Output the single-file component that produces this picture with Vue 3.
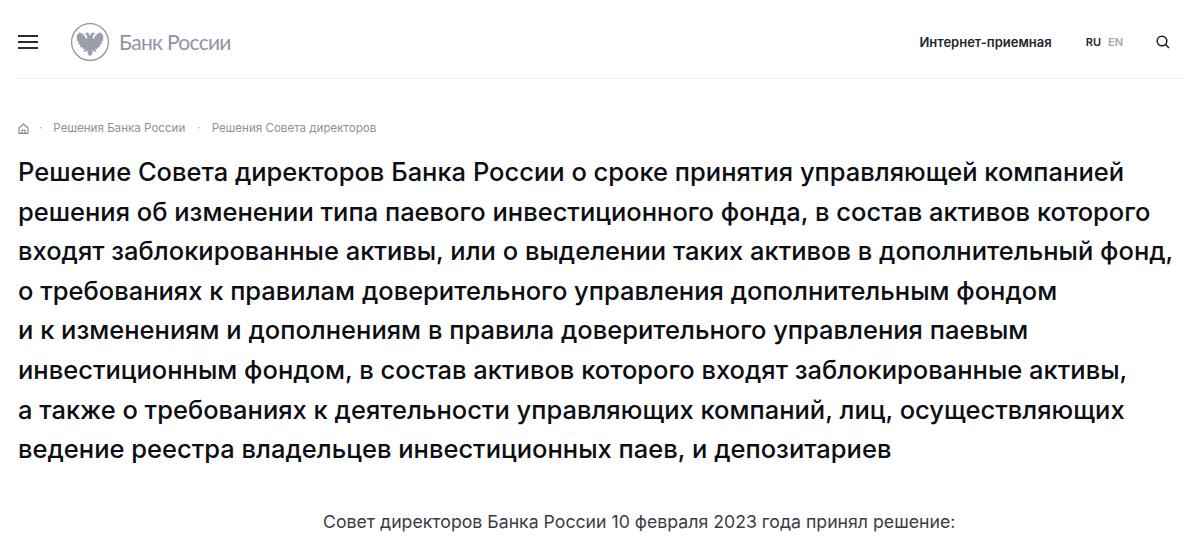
<template>
  <div class="page">
    <header class="top">
      <div class="burger"><i></i><i></i><i></i></div>
      <div class="logo">
        <svg width="40" height="40" viewBox="0 0 40 40">
          <circle cx="20" cy="20" r="18.4" fill="none" stroke="#8f94a3" stroke-width="1.300" />
          <g fill="#9a9fae">
            <path :d="eagleHalf" />
            <path :d="eagleHalf" transform="matrix(-1 0 0 1 40 0)" />
          </g>
        </svg>
        <span class="logo-text">Банк России</span>
      </div>
      <div class="spacer"></div>
      <span class="reception">Интернет-приемная</span>
      <div class="langs"><b>RU</b><b class="off">EN</b></div>
      <svg class="search" width="14" height="14" viewBox="0 0 14 14" fill="none" stroke="#1b1d24" stroke-width="1.500">
        <circle cx="6" cy="6" r="4.800" />
        <path d="M9.500 9.500L13 13" />
      </svg>
    </header>

    <nav class="crumbs">
      <svg class="home" width="11" height="11" viewBox="0 0 11 11" fill="none" stroke="#7f8490" stroke-width="1.100">
        <path d="M1 5l4.500-4L10 5v5.400H1z" />
        <path d="M4 10.400V7h3v3.400" />
      </svg>
      <span class="dot">·</span>
      <span>Решения Банка России</span>
      <span class="dot second">·</span>
      <span>Решения Совета директоров</span>
    </nav>

    <h1 class="title">
      <span v-for="line in titleLines" :key="line">{{ line }}</span>
    </h1>

    <p class="lead">Совет директоров Банка России 10 февраля 2023 года принял решение:</p>
  </div>
</template>

<script setup>
const eagleHalf = 'M20 14L20.700 12.800C21 11.300 22 10.400 23.200 10.500L25.800 12L23.900 12.400C23.200 13.200 22.700 14.600 22.800 16.200C23 17.300 23.500 17.300 24 16.200C25 13.800 27 11.800 30.500 10.300L33.300 13.500L33 19L31.200 19.800L31.900 22L29.700 22.800L30 25L27.600 25.400L27 27.500L25 26.600L26.600 30L24.200 29.600L22.600 28.200L22.500 31L21 33.600L20 34Z'

const titleLines = [
  'Решение Совета директоров Банка России о сроке принятия управляющей компанией',
  'решения об изменении типа паевого инвестиционного фонда, в состав активов которого',
  'входят заблокированные активы, или о выделении таких активов в дополнительный фонд,',
  'о требованиях к правилам доверительного управления дополнительным фондом',
  'и к изменениям и дополнениям в правила доверительного управления паевым',
  'инвестиционным фондом, в состав активов которого входят заблокированные активы,',
  'а также о требованиях к деятельности управляющих компаний, лиц, осуществляющих',
  'ведение реестра владельцев инвестиционных паев, и депозитариев'
]
</script>

<style>
html, body { background: #fff; overflow: hidden; }
</style>

<style scoped>
.page {
  width: 1200px;
  height: 555px;
  overflow: hidden;
  padding: 0 18px;
  box-sizing: border-box;
  font-family: Inter, "Noto Sans", sans-serif;
  color: #0c0e14;
}

.top {
  display: flex;
  align-items: center;
  height: 79px;
  padding-top: 6px;
  padding-right: 12px;
  box-sizing: border-box;
  border-bottom: 1px solid #ececee;
}

.burger {
  display: flex;
  flex-direction: column;
  gap: 4.500px;
  width: 20px;
}

.burger i {
  display: block;
  height: 1.500px;
  background: #2a2c33;
}

.logo {
  display: flex;
  align-items: center;
  margin-left: 32px;
}

.logo-text {
  font-family: Lato, "Open Sans", sans-serif;
  font-size: 21px;
  letter-spacing: -0.700px;
  color: #8f94a3;
  margin-left: 9px;
  margin-bottom: 2px;
}

.spacer { flex: 1; }

.reception {
  font-size: 13px;
  font-weight: 600;
  color: #24262e;
}

.langs {
  display: flex;
  gap: 7px;
  margin-left: 34px;
  font-size: 11px;
}

.langs b { font-weight: 600; color: #24262e; }
.langs .off { color: #a5a8b0; }

.search {
  margin-left: 33px;
}

.crumbs {
  display: flex;
  align-items: center;
  gap: 11px;
  margin-top: 42px;
  font-size: 11.600px;
  color: #8e919a;
  height: 14px;
}

.home { margin-right: -1px; }
.dot { color: #a5a8b0; }
.dot.second { margin-left: 1px; }

.title {
  margin: 17px 0 0;
  font-size: 25.500px;
  line-height: 39.600px;
  font-weight: 500;
  white-space: nowrap;
}

.title span { display: block; }

.lead {
  margin: 42px 0 0 305px;
  font-size: 17.700px;
  line-height: 22px;
  color: #3a3c44;
  white-space: nowrap;
}
</style>
